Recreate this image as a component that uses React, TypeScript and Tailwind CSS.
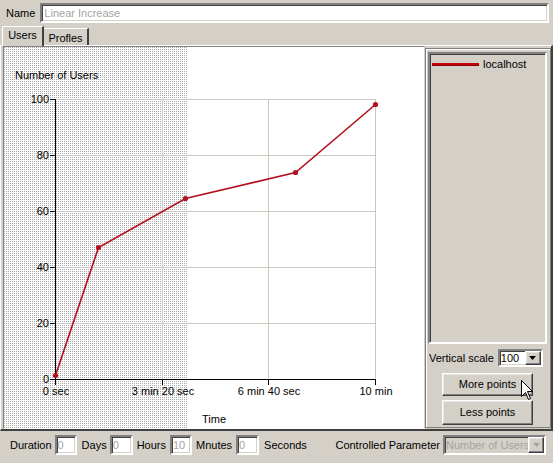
import React from "react";

const sunken =
  "border-2 border-t-[#808080] border-l-[#808080] border-r-white border-b-white shadow-[inset_1px_1px_0_#404040,inset_-1px_-1px_0_#d4d0c8]";
const raised =
  "border border-t-white border-l-white border-r-[#404040] border-b-[#404040] shadow-[inset_-1px_-1px_0_#808080,inset_1px_1px_0_#e8e6e0]";

function DropArrow({ color = "#000" }: { color?: string }) {
  return (
    <div className={`w-[16px] h-full bg-[#d4d0c8] ${raised} flex items-center justify-center`}>
      <svg width="7" height="4" viewBox="0 0 7 4">
        <path d="M0 0 H7 L3.5 4 Z" fill={color} />
      </svg>
    </div>
  );
}

function Chart() {
  const ox = 4;
  const oy = 47;
  const X = (x: number) => x - ox;
  const Y = (y: number) => y - oy;
  const ys = [
    { v: "100", y: 99 },
    { v: "80", y: 155 },
    { v: "60", y: 211 },
    { v: "40", y: 267 },
    { v: "20", y: 323 },
    { v: "0", y: 379 },
  ];
  const xs = [
    { t: "0 sec", x: 55 },
    { t: "3 min 20 sec", x: 162 },
    { t: "6 min 40 sec", x: 268 },
    { t: "10 min", x: 375 },
  ];
  const pts = [
    [55, 375],
    [98, 247],
    [185, 198],
    [295, 172],
    [375, 104],
  ];
  const red = "#b3101f";
  return (
    <svg width="420" height="381" className="block" fontFamily="'Liberation Sans', Arial, sans-serif" fontSize="11">
      <defs>
        <pattern id="dots" width="2" height="2" patternUnits="userSpaceOnUse">
          <rect width="2" height="2" fill="#ffffff" />
          <rect width="1" height="1" fill="#a9a9a9" />
        </pattern>
      </defs>
      <rect x="0" y="0" width="420" height="381" fill="#ffffff" />
      <rect x="0" y="0" width={X(187)} height="381" fill="url(#dots)" />
      {ys.slice(0, 5).map((g) => (
        <line key={g.v} x1={X(55)} x2={X(375) + 0.5} y1={Y(g.y) + 0.5} y2={Y(g.y) + 0.5} stroke="#cdc9c1" />
      ))}
      {xs.slice(1).map((g) => (
        <line key={g.t} x1={X(g.x) + 0.5} x2={X(g.x) + 0.5} y1={Y(99)} y2={Y(379)} stroke="#cdc9c1" />
      ))}
      <line x1={X(55) + 0.5} x2={X(55) + 0.5} y1={Y(99)} y2={Y(380)} stroke="#000" />
      <line x1={X(55)} x2={X(376)} y1={Y(379) + 0.5} y2={Y(379) + 0.5} stroke="#000" />
      {ys.map((g) => (
        <g key={"t" + g.v}>
          <line x1={X(50)} x2={X(55)} y1={Y(g.y) + 0.5} y2={Y(g.y) + 0.5} stroke="#000" />
          <text x={X(49)} y={Y(g.y) + 4} textAnchor="end" fill="#000">
            {g.v}
          </text>
        </g>
      ))}
      {xs.map((g) => (
        <g key={"x" + g.t}>
          <line x1={X(g.x) + 0.5} x2={X(g.x) + 0.5} y1={Y(379)} y2={Y(385)} stroke="#000" />
          <text x={X(g.x) + 1} y={Y(395)} textAnchor="middle" fill="#000">
            {g.t}
          </text>
        </g>
      ))}
      <text x={X(15)} y={Y(79)} fill="#000">
        Number of Users
      </text>
      <text x={X(214)} y={Y(423)} textAnchor="middle" fill="#000">
        Time
      </text>
      <polyline
        points={pts.map(([x, y]) => `${X(x) + 0.5},${Y(y) + 0.5}`).join(" ")}
        fill="none"
        stroke={red}
        strokeWidth="1.6"
      />
      {pts.map(([x, y], i) => (
        <circle key={i} cx={X(x) + 0.5} cy={Y(y) + 0.5} r="2.6" fill={red} />
      ))}
    </svg>
  );
}

export default function App() {
  return (
    <div className="relative w-[553px] h-[463px] overflow-hidden bg-[#d4d0c8] flex flex-col font-['Liberation_Sans',Arial,sans-serif] text-[11px] leading-none text-black">
      {/* Name row */}
      <div className="h-[26px] flex items-center pl-[6px] pr-[4px] gap-[5px]">
        <span>Name</span>
        <div className={`flex-1 h-[20px] bg-white ${sunken} flex items-center px-[2px] text-[#a3a3a3]`}>
          Linear Increase
        </div>
      </div>

      {/* Tabs */}
      <div className="h-[19px] flex items-end pl-[2px]">
        <div className="relative z-10 -mb-[1px] h-[20px] w-[42px] bg-[#d4d0c8] border-t border-l border-t-white border-l-white border-r-2 border-r-[#404040] rounded-tl-[2px] flex items-center justify-center pb-[2px]">
          Users
        </div>
        <div className="h-[17px] w-[45px] bg-[#d4d0c8] border-t border-t-white border-r-2 border-r-[#404040] flex items-center justify-center pt-[2px]">
          Profles
        </div>
      </div>

      {/* Tab panel */}
      <div className="h-[386px] flex border-t border-l border-t-white border-l-white border-r-2 border-b-2 border-r-[#404040] border-b-[#404040]">
        <div className="ml-[2px] h-[383px] border border-t-[#808080] border-l-[#808080] border-r-[#d4d0c8] border-b-white">
          <Chart />
        </div>
        <div className="mt-[2px] h-[380px] w-[126px] border border-[#808080] shadow-[inset_1px_1px_0_white] flex flex-col pl-[2px] pr-[3px] pt-[3px]">
          <div className={`h-[292px] ${sunken} bg-[#d4d0c8] pt-[5px] pl-[2px]`}>
            <div className="flex items-center gap-[4px]">
              <div className="w-[47px] h-[3px] bg-[#c4000f] shadow-[inset_0_-1px_0_#8a000a]" />
              <span>localhost</span>
            </div>
          </div>
          <div className="mt-[5px] h-[18px] flex items-center">
            <span className="ml-[1px]">Vertical scale</span>
            <div className={`ml-[4px] w-[45px] h-[18px] bg-white ${sunken} flex items-center`}>
              <span className="flex-1 pl-[1px]">100</span>
              <DropArrow />
            </div>
          </div>
          <div className={`mt-[6px] ml-[14px] w-[91px] h-[23px] bg-[#d4d0c8] ${raised} flex items-center justify-center`}>
            More points
          </div>
          <div className={`mt-[4px] ml-[14px] w-[91px] h-[25px] bg-[#d4d0c8] ${raised} flex items-center justify-center`}>
            Less points
          </div>
        </div>
      </div>

      {/* Bottom bar */}
      <div className="flex-1 flex items-start pt-[4px] pl-[10px] pr-[7px]">
        <div className="h-[20px] flex items-center">
          <span>Duration</span>
          <div className={`ml-[3px] w-[22px] h-[20px] bg-white ${sunken} flex items-center pl-[1px] text-[#a3a3a3]`}>0</div>
          <span className="ml-[5px]">Days</span>
          <div className={`ml-[3px] w-[23px] h-[20px] bg-white ${sunken} flex items-center pl-[1px] text-[#a3a3a3]`}>0</div>
          <span className="ml-[4px]">Hours</span>
          <div className={`ml-[4px] w-[22px] h-[20px] bg-white ${sunken} flex items-center pl-[1px] text-[#a3a3a3]`}>10</div>
          <span className="ml-[4px]">Mnutes</span>
          <div className={`ml-[4px] w-[23px] h-[20px] bg-white ${sunken} flex items-center pl-[1px] text-[#a3a3a3]`}>0</div>
          <span className="ml-[5px]">Seconds</span>
        </div>
        <div className="ml-auto h-[20px] flex items-center">
          <span>Controlled Parameter</span>
          <div className={`ml-[3px] w-[103px] h-[20px] bg-[#d4d0c8] ${sunken} flex items-center`}>
            <span className="flex-1 pl-[1px] text-[#a3a3a3] whitespace-nowrap overflow-hidden">Number of Users</span>
            <DropArrow color="#a0a0a0" />
          </div>
        </div>
      </div>

      {/* Mouse cursor */}
      <svg className="absolute left-[521px] top-[380px]" width="13" height="21" viewBox="0 0 13 21">
        <path d="M0.5 0.5 V16.5 L4.5 12.5 L7.5 19.5 L9.5 18.5 L6.5 11.5 H11.5 Z" fill="#fff" stroke="#000" strokeWidth="1" />
      </svg>
    </div>
  );
}
